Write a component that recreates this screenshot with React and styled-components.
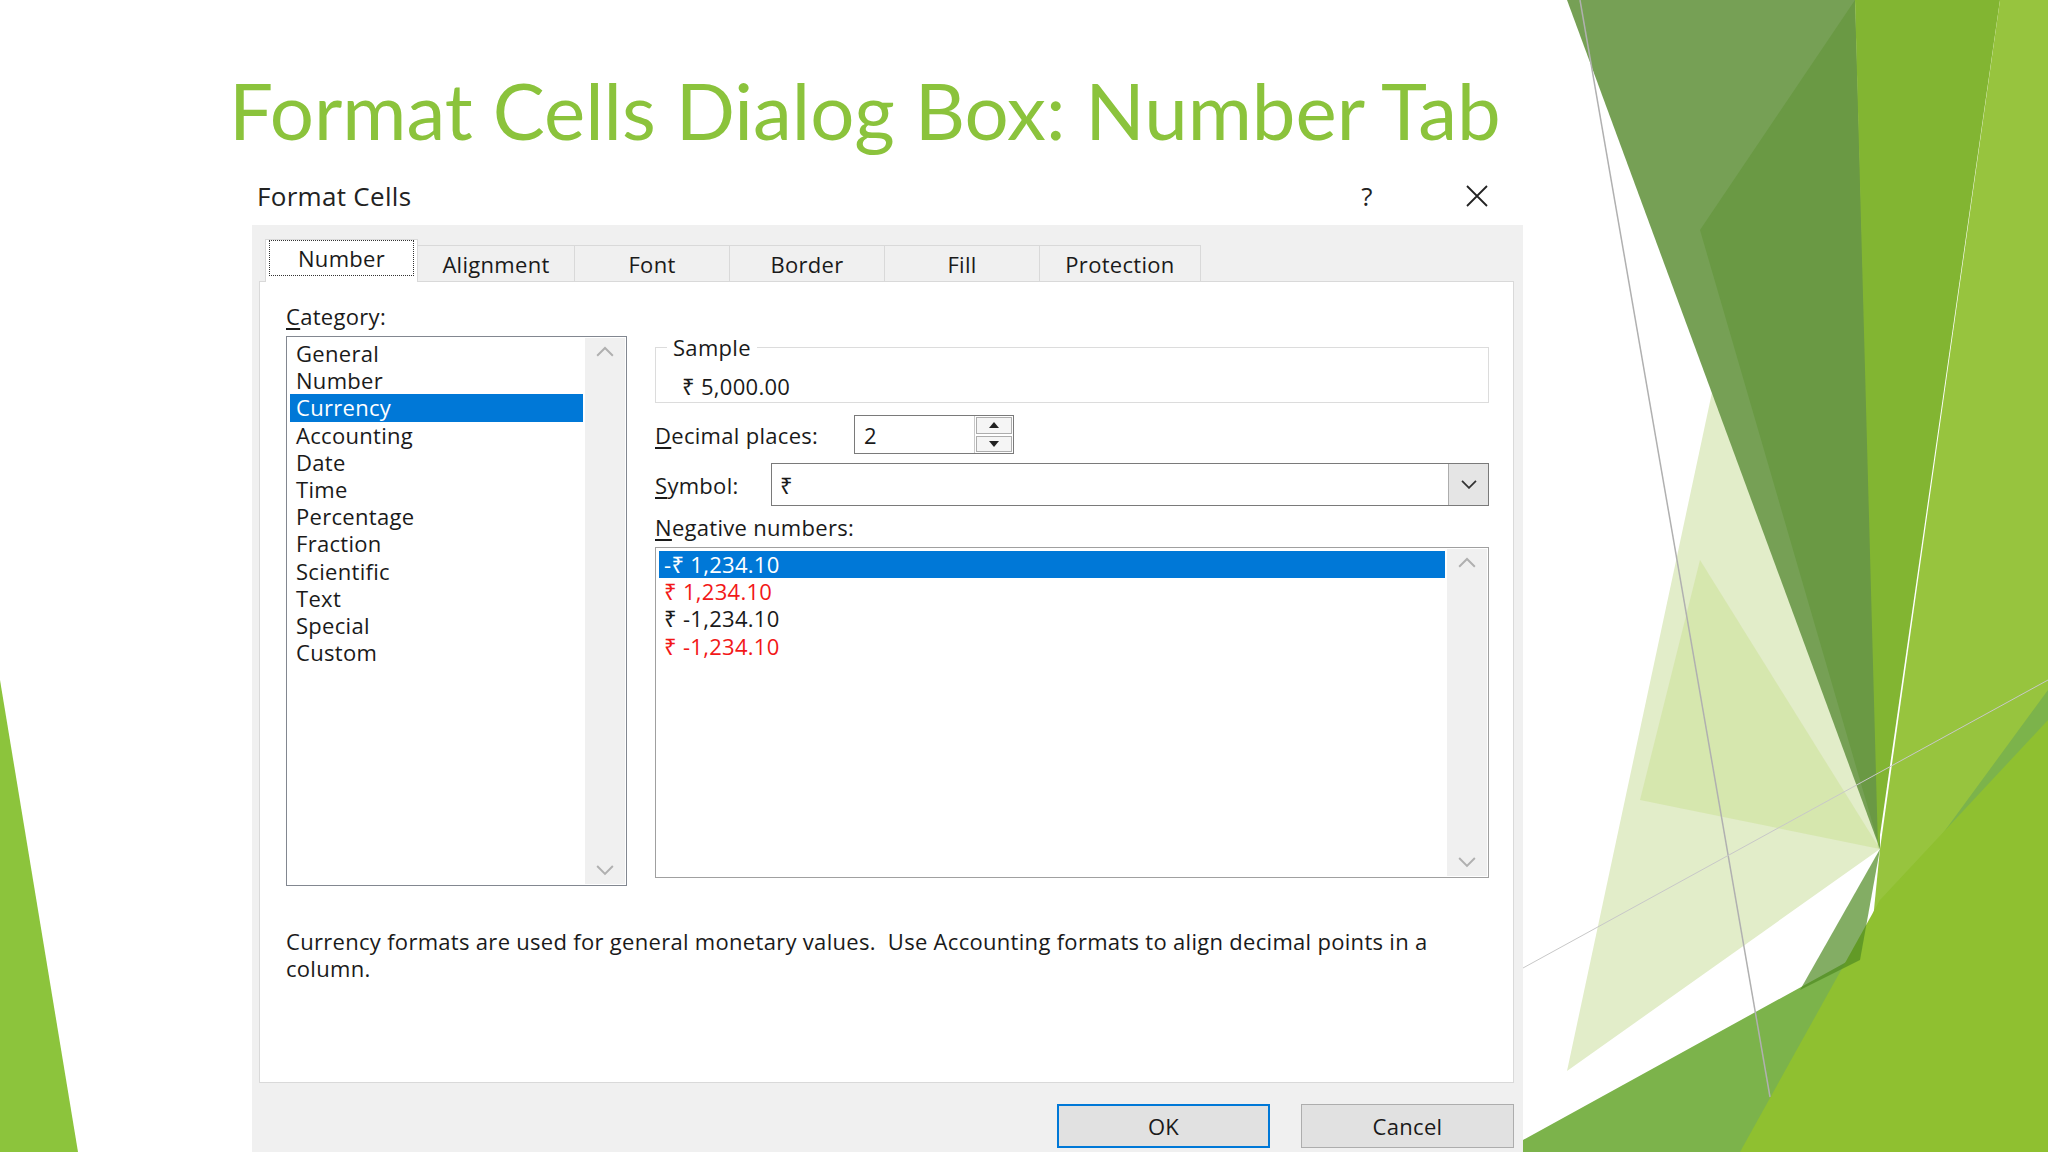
import React from "react";
import styled, { createGlobalStyle } from "styled-components";

const Global = createGlobalStyle`
  html, body { margin: 0; padding: 0; background: #fff; }
  body { font-family: "Open Sans", "Noto Sans", sans-serif; }
`;

const Page = styled.div`
  position: relative;
  width: 2048px;
  height: 1152px;
  overflow: hidden;
  background: #fff;
`;

const Backdrop = styled.svg`
  position: absolute;
  inset: 0;
  z-index: 0;
`;

const Content = styled.div`
  position: relative;
  z-index: 1;
  display: flex;
  flex-direction: column;
  padding-left: 229px;
`;

const Title = styled.h1`
  margin: 0;
  height: 167px;
  box-sizing: border-box;
  padding-top: 60px;
  font-family: "Lato", "Open Sans", sans-serif;
  font-weight: 400;
  font-size: 78px;
  line-height: 100px;
  color: #8bc33c;
  white-space: nowrap;
`;

const Dialog = styled.div`
  margin-left: 3px;
  width: 1291px;
  height: 985px;
  background: #fff;
  display: flex;
  flex-direction: column;
  font-family: "Open Sans", "Noto Sans", sans-serif;
  font-size: 22px;
  letter-spacing: 0.3px;
  color: #1a1a1a;
`;

const TitleBar = styled.div`
  height: 58px;
  display: flex;
  align-items: center;
  padding-left: 25px;
  font-size: 26px;
  color: #222;
`;

const TitleText = styled.div`
  flex: 1;
`;

const TitleBtn = styled.div`
  width: 60px;
  display: flex;
  justify-content: center;
  align-items: center;
  margin-right: ${(p) => p.$mr || 0}px;
  font-size: 26px;
`;

const Body = styled.div`
  flex: 1;
  margin-left: 20px;
  background: #f0f0f0;
  display: flex;
  flex-direction: column;
  padding: 14px 9px 0 7px;
`;

const Tabs = styled.div`
  display: flex;
  align-items: flex-end;
  height: 43px;
  padding-left: 6px;
  position: relative;
  z-index: 2;
`;

const Tab = styled.div`
  width: ${(p) => p.$w}px;
  height: ${(p) => (p.$active ? 43 : 37)}px;
  box-sizing: border-box;
  display: flex;
  align-items: center;
  justify-content: center;
  border: 1px solid #d9d9d9;
  border-bottom: ${(p) => (p.$active ? "none" : "1px solid #d9d9d9")};
  margin-left: ${(p) => (p.$active ? 0 : -1)}px;
  background: ${(p) => (p.$active ? "#fff" : "#f0f0f0")};
`;

const Focus = styled.span`
  box-sizing: border-box;
  width: calc(100% - 6px);
  text-align: center;
  border: 1px dotted #333;
  padding: 2px 0;
  margin-top: -6px;
`;

const Panel = styled.div`
  height: 802px;
  margin-top: -1px;
  box-sizing: border-box;
  background: #fff;
  border: 1px solid #d9d9d9;
  display: flex;
  flex-direction: column;
  padding: 20px 24px 0 26px;
`;

const Columns = styled.div`
  display: flex;
  gap: 28px;
`;

const LeftCol = styled.div`
  width: 343px;
  display: flex;
  flex-direction: column;
`;

const RightCol = styled.div`
  width: 834px;
  display: flex;
  flex-direction: column;
`;

const Label = styled.div`
  height: 28px;
  line-height: 28px;
  flex: none;
  width: ${(p) => (p.$w ? `${p.$w}px` : "auto")};
  margin-top: ${(p) => p.$mt || 0}px;
  margin-bottom: ${(p) => p.$mb || 0}px;
  u { text-decoration: underline; text-underline-offset: 3px; }
`;

const ListBox = styled.div`
  height: ${(p) => p.$h}px;
  box-sizing: border-box;
  border: 1px solid ${(p) => p.$border || "#828790"};
  display: flex;
  padding: 3px 1px 1px 3px;
`;

const Items = styled.div`
  flex: 1;
  display: flex;
  flex-direction: column;
`;

const Item = styled.div`
  height: 27.2px;
  line-height: 27px;
  padding-left: ${(p) => p.$pl || 6}px;
  background: ${(p) => (p.$sel ? "#0078d7" : "transparent")};
  color: ${(p) => (p.$sel ? "#fff" : p.$red ? "#f21818" : "#1a1a1a")};
  white-space: pre;
`;

const ScrollBar = styled.div`
  width: 40px;
  margin: -2px 0 0 2px;
  background: #f0f0f0;
  display: flex;
  flex-direction: column;
  justify-content: space-between;
  align-items: center;
  padding: 8px 0;
`;

const Fieldset = styled.fieldset`
  margin: 35px 0 0 0;
  height: 66px;
  box-sizing: border-box;
  border: 1px solid #dcdcdc;
  padding: 0 0 0 26px;
  legend { padding: 0 6px; margin-left: -15px; line-height: 20px; }
`;

const SampleText = styled.div`
  line-height: 30px;
  margin-top: 14px;
`;

const Row = styled.div`
  display: flex;
  align-items: center;
  margin-top: ${(p) => p.$mt}px;
`;

const Input = styled.div`
  width: 160px;
  height: 39px;
  box-sizing: border-box;
  border: 1px solid #7a7a7a;
  display: flex;
  padding-left: 9px;
  align-items: center;
`;

const Spin = styled.div`
  margin-left: auto;
  width: 38px;
  height: 100%;
  display: flex;
  flex-direction: column;
  border-left: 1px solid #c8c8c8;
`;

const SpinBtn = styled.div`
  flex: 1;
  display: flex;
  align-items: center;
  justify-content: center;
  background: #f5f5f5;
  border: 1px solid #adadad;
  margin: 1px;
`;

const Select = styled.div`
  width: 718px;
  height: 43px;
  box-sizing: border-box;
  border: 1px solid #7a7a7a;
  display: flex;
  align-items: center;
  padding-left: 8px;
`;

const DropBtn = styled.div`
  margin-left: auto;
  width: 40px;
  height: 100%;
  box-sizing: border-box;
  border-left: 1px solid #adadad;
  background: #e5e5e5;
  display: flex;
  align-items: center;
  justify-content: center;
`;

const Desc = styled.div`
  margin-top: 42px;
  width: 1215px;
  line-height: 27px;
  white-space: pre-wrap;
`;

const Buttons = styled.div`
  display: flex;
  justify-content: flex-end;
  gap: 31px;
  margin-top: 21px;
  margin-right: 0;
`;

const Button = styled.div`
  width: 213px;
  height: 44px;
  box-sizing: border-box;
  background: #e1e1e1;
  border: ${(p) => (p.$primary ? "2px solid #0078d7" : "1px solid #adadad")};
  display: flex;
  align-items: center;
  justify-content: center;
`;

const Chevron = ({ up, color = "#b0b0b0", size = 18 }) => (
  <svg width={size} height={size * 0.6} viewBox="0 0 18 11">
    <path d={up ? "M1 10 L9 2 L17 10" : "M1 1 L9 9 L17 1"} fill="none" stroke={color} strokeWidth="2" />
  </svg>
);

const Tri = ({ up }) => (
  <svg width="10" height="6" viewBox="0 0 10 6">
    <path d={up ? "M0 6 L5 0 L10 6Z" : "M0 0 L5 6 L10 0Z"} fill="#222" />
  </svg>
);

const categories = ["General", "Number", "Currency", "Accounting", "Date", "Time", "Percentage", "Fraction", "Scientific", "Text", "Special", "Custom"];
const negatives = [
  { t: "-₹ 1,234.10", sel: true },
  { t: "₹ 1,234.10", red: true },
  { t: "₹ -1,234.10" },
  { t: "₹ -1,234.10", red: true },
];
const tabs = [
  { n: "Number", w: 153 },
  { n: "Alignment", w: 158 },
  { n: "Font", w: 156 },
  { n: "Border", w: 156 },
  { n: "Fill", w: 156 },
  { n: "Protection", w: 162 },
];

export default function App() {
  return (
    <Page>
      <Global />
      <Backdrop width="2048" height="1152" viewBox="0 0 2048 1152">
        <polygon points="0,680 78,1152 0,1152" fill="#8cc43c" />
        <polygon points="1567,1071 1720,355 1880,849" fill="#e2edc9" />
        <polygon points="1640,800 1700,560 1880,849" fill="#d3e5a8" opacity="0.8" />
        <polygon points="1567,0 1855,0 1880,849" fill="#76a055" />
        <polygon points="1700,230 1855,0 1880,849" fill="#6a9944" />
        <polygon points="1855,0 2000,0 1878,849" fill="#82b532" />
        <polygon points="2000,0 2048,0 2048,1152 1850,1152 1880,849" fill="#97c43e" />
        <polygon points="1523,1140 1850,960 2048,690 2048,1152 1523,1152" fill="#7cb34b" />
        <polygon points="1880,900 2048,720 2048,1152 1740,1152" fill="#8fc030" />
        <polygon points="1880,849 1860,960 1800,990" fill="#4f8a22" opacity="0.7" />
        <line x1="1580" y1="0" x2="1770" y2="1097" stroke="#b0b0b0" strokeWidth="1.5" />
        <line x1="1523" y1="968" x2="2048" y2="680" stroke="#c8c8c8" strokeWidth="1" />
      </Backdrop>
      <Content>
        <Title>Format Cells Dialog Box: Number Tab</Title>
        <Dialog>
          <TitleBar>
            <TitleText>Format Cells</TitleText>
            <TitleBtn $mr={50}>?</TitleBtn>
            <TitleBtn $mr={16}>
              <svg width="24" height="24" viewBox="0 0 24 24">
                <path d="M2 2 L22 22 M22 2 L2 22" stroke="#222" strokeWidth="1.8" />
              </svg>
            </TitleBtn>
          </TitleBar>
          <Body>
            <Tabs>
              {tabs.map((t, i) => (
                <Tab key={t.n} $w={t.w} $active={i === 0}>
                  {i === 0 ? <Focus>{t.n}</Focus> : t.n}
                </Tab>
              ))}
            </Tabs>
            <Panel>
              <Columns>
                <LeftCol>
                  <Label $mb={6}><u>C</u>ategory:</Label>
                  <ListBox $h={550}>
                    <Items>
                      {categories.map((c) => (
                        <Item key={c} $sel={c === "Currency"}>{c}</Item>
                      ))}
                    </Items>
                    <ScrollBar>
                      <Chevron up />
                      <Chevron />
                    </ScrollBar>
                  </ListBox>
                </LeftCol>
                <RightCol>
                  <Fieldset>
                    <legend>Sample</legend>
                    <SampleText>₹ 5,000.00</SampleText>
                  </Fieldset>
                  <Row $mt={12}>
                    <Label $w={199}><u>D</u>ecimal places:</Label>
                    <Input>
                      2
                      <Spin>
                        <SpinBtn><Tri up /></SpinBtn>
                        <SpinBtn><Tri /></SpinBtn>
                      </Spin>
                    </Input>
                  </Row>
                  <Row $mt={9}>
                    <Label $w={116}><u>S</u>ymbol:</Label>
                    <Select>
                      ₹
                      <DropBtn><Chevron color="#333" size={16} /></DropBtn>
                    </Select>
                  </Row>
                  <Label $mt={7} $mb={6}><u>N</u>egative numbers:</Label>
                  <ListBox $h={331} $border="#a0a0a0">
                    <Items>
                      {negatives.map((n, i) => (
                        <Item key={i} $sel={n.sel} $red={n.red} $pl={5}>{n.t}</Item>
                      ))}
                    </Items>
                    <ScrollBar>
                      <Chevron up />
                      <Chevron />
                    </ScrollBar>
                  </ListBox>
                </RightCol>
              </Columns>
              <Desc>{"Currency formats are used for general monetary values.  Use Accounting formats to align decimal points in a column."}</Desc>
            </Panel>
            <Buttons>
              <Button $primary>OK</Button>
              <Button>Cancel</Button>
            </Buttons>
          </Body>
        </Dialog>
      </Content>
    </Page>
  );
}
